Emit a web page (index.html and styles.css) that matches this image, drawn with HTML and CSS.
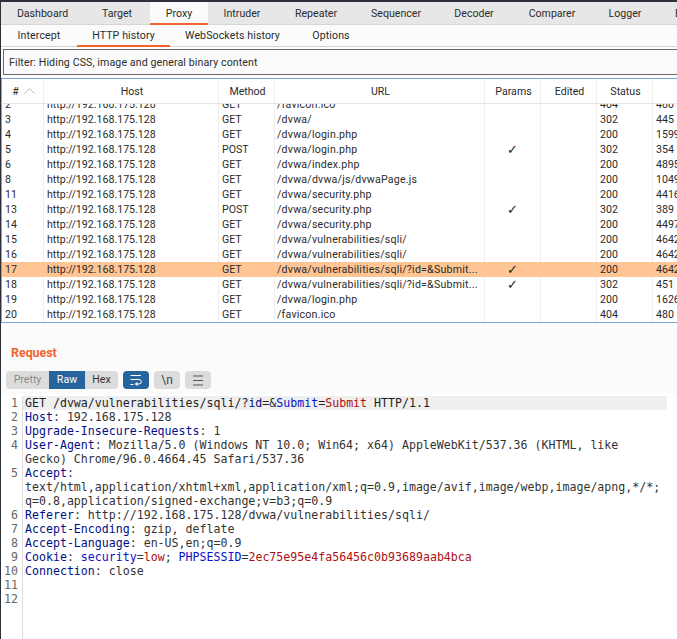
FILE: index.html
```html
<!DOCTYPE html>
<html lang="en">
<head>
<meta charset="utf-8">
<title>Burp Suite</title>
<link rel="stylesheet" href="styles.css">
</head>
<body>
<div class="app">
  <nav class="tabs main-tabs">
    <span class="tab t-dashboard">Dashboard</span>
    <span class="tab t-target">Target</span>
    <span class="tab t-proxy active">Proxy</span>
    <span class="tab t-intruder">Intruder</span>
    <span class="tab t-repeater">Repeater</span>
    <span class="tab t-sequencer">Sequencer</span>
    <span class="tab t-decoder">Decoder</span>
    <span class="tab t-comparer">Comparer</span>
    <span class="tab t-logger">Logger</span>
    <span class="tab t-extender">E</span>
  </nav>
  <nav class="tabs sub-tabs">
    <span class="tab s-intercept">Intercept</span>
    <span class="tab s-history active">HTTP history</span>
    <span class="tab s-ws">WebSockets history</span>
    <span class="tab s-options">Options</span>
  </nav>
  <div class="filter-wrap"><div class="filter">Filter: Hiding CSS, image and general binary content</div></div>
  <section class="table">
    <div class="row head">
      <span class="c num">#<svg class="sort" width="11" height="6" viewBox="0 0 11 6"><path d="M.5 5.500 5.500.7l5 4.800" fill="none" stroke="#b5b5b5"/></svg></span>
      <span class="c host">Host</span><span class="c meth">Method</span><span class="c url">URL</span><span class="c par">Params</span><span class="c edi">Edited</span><span class="c sta">Status</span><span class="c len">Le</span>
    </div>
    <div class="body">
      <div class="row"><span class="c num">2</span><span class="c host">http://192.168.175.128</span><span class="c meth">GET</span><span class="c url">/favicon.ico</span><span class="c par"></span><span class="c edi"></span><span class="c sta">404</span><span class="c len">480</span></div>
      <div class="row"><span class="c num">3</span><span class="c host">http://192.168.175.128</span><span class="c meth">GET</span><span class="c url">/dvwa/</span><span class="c par"></span><span class="c edi"></span><span class="c sta">302</span><span class="c len">445</span></div>
      <div class="row"><span class="c num">4</span><span class="c host">http://192.168.175.128</span><span class="c meth">GET</span><span class="c url">/dvwa/login.php</span><span class="c par"></span><span class="c edi"></span><span class="c sta">200</span><span class="c len">1599</span></div>
      <div class="row"><span class="c num">5</span><span class="c host">http://192.168.175.128</span><span class="c meth">POST</span><span class="c url">/dvwa/login.php</span><span class="c par check">✓</span><span class="c edi"></span><span class="c sta">302</span><span class="c len">354</span></div>
      <div class="row"><span class="c num">6</span><span class="c host">http://192.168.175.128</span><span class="c meth">GET</span><span class="c url">/dvwa/index.php</span><span class="c par"></span><span class="c edi"></span><span class="c sta">200</span><span class="c len">4895</span></div>
      <div class="row"><span class="c num">8</span><span class="c host">http://192.168.175.128</span><span class="c meth">GET</span><span class="c url">/dvwa/dvwa/js/dvwaPage.js</span><span class="c par"></span><span class="c edi"></span><span class="c sta">200</span><span class="c len">1049</span></div>
      <div class="row"><span class="c num">11</span><span class="c host">http://192.168.175.128</span><span class="c meth">GET</span><span class="c url">/dvwa/security.php</span><span class="c par"></span><span class="c edi"></span><span class="c sta">200</span><span class="c len">4416</span></div>
      <div class="row"><span class="c num">13</span><span class="c host">http://192.168.175.128</span><span class="c meth">POST</span><span class="c url">/dvwa/security.php</span><span class="c par check">✓</span><span class="c edi"></span><span class="c sta">302</span><span class="c len">389</span></div>
      <div class="row"><span class="c num">14</span><span class="c host">http://192.168.175.128</span><span class="c meth">GET</span><span class="c url">/dvwa/security.php</span><span class="c par"></span><span class="c edi"></span><span class="c sta">200</span><span class="c len">4497</span></div>
      <div class="row"><span class="c num">15</span><span class="c host">http://192.168.175.128</span><span class="c meth">GET</span><span class="c url">/dvwa/vulnerabilities/sqli/</span><span class="c par"></span><span class="c edi"></span><span class="c sta">200</span><span class="c len">4642</span></div>
      <div class="row"><span class="c num">16</span><span class="c host">http://192.168.175.128</span><span class="c meth">GET</span><span class="c url">/dvwa/vulnerabilities/sqli/</span><span class="c par"></span><span class="c edi"></span><span class="c sta">200</span><span class="c len">4642</span></div>
      <div class="row selected"><span class="c num">17</span><span class="c host">http://192.168.175.128</span><span class="c meth">GET</span><span class="c url">/dvwa/vulnerabilities/sqli/?id=&amp;Submit...</span><span class="c par check">✓</span><span class="c edi"></span><span class="c sta">200</span><span class="c len">4642</span></div>
      <div class="row"><span class="c num">18</span><span class="c host">http://192.168.175.128</span><span class="c meth">GET</span><span class="c url">/dvwa/vulnerabilities/sqli/?id=&amp;Submit...</span><span class="c par check">✓</span><span class="c edi"></span><span class="c sta">302</span><span class="c len">451</span></div>
      <div class="row"><span class="c num">19</span><span class="c host">http://192.168.175.128</span><span class="c meth">GET</span><span class="c url">/dvwa/login.php</span><span class="c par"></span><span class="c edi"></span><span class="c sta">200</span><span class="c len">1626</span></div>
      <div class="row"><span class="c num">20</span><span class="c host">http://192.168.175.128</span><span class="c meth">GET</span><span class="c url">/favicon.ico</span><span class="c par"></span><span class="c edi"></span><span class="c sta">404</span><span class="c len">480</span></div>
    </div>
  </section>
  <section class="request">
    <h2 class="title">Request</h2>
    <div class="toolbar">
      <div class="seg"><span class="pretty">Pretty</span><span class="raw">Raw</span><span class="hex">Hex</span></div>
      <span class="btn on"><svg width="12" height="12" viewBox="0 0 12 12"><path d="M.5 1.500h10.500M.5 5.500h8.500a2.200 2.200 0 0 1 0 4.500H6M.5 10.500h3" fill="none" stroke="#fff"/><path d="M7.500 8v4L4.500 10z" fill="#fff"/></svg></span>
      <span class="btn nl">\n</span>
      <span class="btn"><svg width="12" height="11" viewBox="0 0 12 11"><path d="M1 1h10M1 5.500h10M1 10h10" fill="none" stroke="#555" stroke-width="1.200"/></svg></span>
    </div>
  </section>
  <section class="editor">
    <div class="line cur"><i>1</i><code>GET /dvwa/vulnerabilities/sqli/?<b>id</b>=&amp;<b class="k">Submit</b>=<u>Submit</u> HTTP/1.1</code></div>
    <div class="line"><i>2</i><code><b>Host</b>: 192.168.175.128</code></div>
    <div class="line"><i>3</i><code><b>Upgrade-Insecure-Requests</b>: 1</code></div>
    <div class="line"><i>4</i><code><b>User-Agent</b>: Mozilla/5.0 (Windows NT 10.0; Win64; x64) AppleWebKit/537.36 (KHTML, like<br>Gecko) Chrome/96.0.4664.45 Safari/537.36</code></div>
    <div class="line"><i>5</i><code><b>Accept</b>:<br>text/html,application/xhtml+xml,application/xml;q=0.9,image/avif,image/webp,image/apng,*/*;<br>q=0.8,application/signed-exchange;v=b3;q=0.9</code></div>
    <div class="line"><i>6</i><code><b>Referer</b>: http://192.168.175.128/dvwa/vulnerabilities/sqli/</code></div>
    <div class="line"><i>7</i><code><b>Accept-Encoding</b>: gzip, deflate</code></div>
    <div class="line"><i>8</i><code><b>Accept-Language</b>: en-US,en;q=0.9</code></div>
    <div class="line"><i>9</i><code><b>Cookie</b>: <b class="k">security</b>=<u>low</u>; <b class="k">PHPSESSID</b>=<u>2ec75e95e4fa56456c0b93689aab4bca</u></code></div>
    <div class="line"><i>10</i><code><b>Connection</b>: close</code></div>
    <div class="line"><i>11</i><code></code></div>
    <div class="line"><i>12</i><code></code></div>
    <div class="line fill"><i></i><code></code></div>
  </section>
</div>
</body>
</html>
```
FILE: styles.css
```css
html, body { margin: 0; padding: 0; height: 100%; overflow: hidden; background: #fff; }
.app {
  width: 677px; height: 639px; box-sizing: border-box;
  overflow: hidden; display: flex; flex-direction: column;
  border-left: 1px solid #2b303b; border-top: 2px solid #2b303b;
  font: 10.600px/15px Roboto, sans-serif; color: #2b2b2b;
}
.tabs { display: flex; flex: none; white-space: nowrap; box-sizing: border-box; }
.tab { display: block; flex: none; text-align: center; box-sizing: border-box; }
.main-tabs { height: 23px; background: #e7e7e7; border-bottom: 1px solid #d5d5d5; line-height: 23px; }
.main-tabs .active { background: #fbfbfb; border-bottom: 2px solid #f26430; height: 23px; }
.t-dashboard { width: 83px; }
.t-target { width: 66px; }
.t-proxy { width: 58px; }
.t-intruder { width: 68px; }
.t-repeater { width: 80px; }
.t-sequencer { width: 80px; }
.t-decoder { width: 76px; }
.t-comparer { width: 80px; }
.t-logger { width: 66px; }
.t-extender { width: 40px; }
.sub-tabs { height: 22px; background: #fbfbfb; border-bottom: 1px solid #d5d5d5; line-height: 21px; letter-spacing: .1px; }
.sub-tabs .active { border-bottom: 2px solid #f26430; height: 22px; }
.s-intercept { width: 76px; }
.s-history { width: 93px; }
.s-ws { width: 125px; }
.s-options { width: 72px; }
.filter-wrap { flex: none; height: 31px; background: #fbfbfb; padding: 2px 0 0 2px; box-sizing: border-box; }
.filter { height: 26px; box-sizing: border-box; border: 1px solid #6a6a6a; border-right: 0; line-height: 25px; padding-left: 5px; background: #fbfbfb; letter-spacing: .11px; }
.table { flex: none; height: 245px; display: flex; flex-direction: column; box-sizing: border-box; border-top: 1px solid #7aa7d8; border-bottom: 1px solid #7aa7d8; background: #fff; }
.row { display: flex; height: 15px; line-height: 15px; flex: none; border-left: 1px solid #7aa7d8; }
.head { height: 25px; line-height: 25px; border-bottom: 1px solid #e4e4e4; box-sizing: border-box; background: #fff; }
.head .c { text-align: center; padding: 0 0 0 2px; }
.body { flex: 1; min-height: 0; overflow: hidden; display: flex; flex-direction: column; justify-content: flex-end; }
.c { flex: none; box-sizing: border-box; border-right: 1px solid #eee; padding-left: 3px; white-space: nowrap; overflow: hidden; }
.num { width: 42px; }
.host { width: 175px; }
.meth { width: 56px; }
.url { width: 210px; padding-left: 2px; letter-spacing: .22px; }
.head .url { letter-spacing: 0; }
.par { width: 56px; text-align: center; padding-left: 0; }
.check { font: 13px/15px "DejaVu Sans", sans-serif; color: #222; }
.edi { width: 56px; }
.sta { width: 56px; }
.len { width: 60px; border-right: 0; }
.sort { margin-left: 5px; vertical-align: 1px; }
.selected { background: #ffc594; }
.selected .c { border-right-color: #ffc594; }
.request { flex: none; height: 66px; background: #fbfbfb; margin-top: 5px; box-sizing: border-box; padding: 0 0 0 5px; }
.title { margin: 0; padding: 16px 0 0 5px; font: 700 12.400px/17px Roboto, sans-serif; color: #f26430; }
.toolbar { display: flex; gap: 5px; margin-top: 10px; align-items: center; }
.seg { display: flex; height: 18px; border-radius: 4px; overflow: hidden; background: #dcdcdc; line-height: 18px; width: 112px; }
.seg span { display: block; text-align: center; }
.pretty { width: 43px; color: #8a8a8a; }
.raw { width: 36px; background: #26649e; color: #fff; }
.hex { width: 33px; color: #333; }
.btn { display: flex; align-items: center; justify-content: center; width: 26px; height: 18px; border-radius: 4px; background: #dcdcdc; color: #444; }
.btn.on { background: #26649e; }
.nl { font-size: 12px; }
.editor { flex: 1; min-height: 0; padding-top: 2px; background: #fff; font: 11.600px/14px "DejaVu Sans Mono", monospace; color: #333; overflow: hidden; display: flex; flex-direction: column; }
.line { display: flex; flex: none; }
.line i { flex: none; width: 21px; font-style: normal; text-align: right; color: #666; padding-right: 4px; box-sizing: border-box; background: #fff; }
.line code { flex: none; font: inherit; width: 654px; box-sizing: border-box; border-left: 1px solid #ddd; padding-left: 2px; }
.line.cur code { background: linear-gradient(#efefef, #efefef) no-repeat 0 0 / 644px 100%; color: #1e1e1e; }
.line b { font-weight: 400; color: #000f85; }
.line b.k { color: #0a13c8; }
.line u { text-decoration: none; color: #b00f0f; }
.fill { flex: 1; }
```
